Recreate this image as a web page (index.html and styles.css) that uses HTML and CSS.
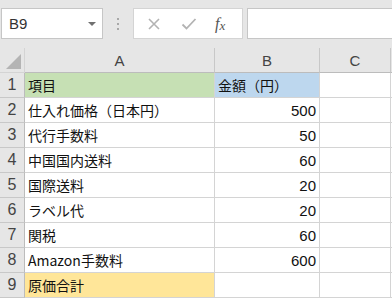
FILE: index.html
```html
<!DOCTYPE html>
<html lang="ja">
<head>
  <meta charset="UTF-8">
  <meta name="viewport" content="width=device-width, initial-scale=1.0">
  <title>原価計算</title>
  <link rel="stylesheet" href="styles.css">
</head>
<body>
  <div class="formula-bar">
    <div class="name-box">
      <span class="cell-ref">B9</span>
      <span class="drop"></span>
    </div>
    <div class="grip">
      <span></span><span></span><span></span>
    </div>
    <div class="fx-buttons">
      <svg class="btn" width="14" height="14" viewBox="0 0 14 14">
        <path d="M2 2 L12 12 M12 2 L2 12" stroke="#b3b3b3" stroke-width="1.6" fill="none"/>
      </svg>
      <svg class="btn" width="16" height="14" viewBox="0 0 16 14">
        <path d="M1.5 7.5 L5.5 11.5 L14.5 2" stroke="#b3b3b3" stroke-width="1.8" fill="none"/>
      </svg>
      <span class="fx">f<span class="fx-x">x</span></span>
    </div>
    <div class="formula-input"></div>
  </div>

  <div class="sheet">
    <div class="corner"><span class="tri"></span></div>
    <div class="col-head">A</div>
    <div class="col-head">B</div>
    <div class="col-head">C</div>
    <div class="col-head rest"></div>

    <div class="row-head">1</div>
    <div class="cell green">項目</div>
    <div class="cell blue">金額（円）</div>
    <div class="cell"></div>
    <div class="cell rest"></div>

    <div class="row-head">2</div>
    <div class="cell">仕入れ価格（日本円）</div>
    <div class="cell num">500</div>
    <div class="cell"></div>
    <div class="cell rest"></div>

    <div class="row-head">3</div>
    <div class="cell">代行手数料</div>
    <div class="cell num">50</div>
    <div class="cell"></div>
    <div class="cell rest"></div>

    <div class="row-head">4</div>
    <div class="cell">中国国内送料</div>
    <div class="cell num">60</div>
    <div class="cell"></div>
    <div class="cell rest"></div>

    <div class="row-head">5</div>
    <div class="cell">国際送料</div>
    <div class="cell num">20</div>
    <div class="cell"></div>
    <div class="cell rest"></div>

    <div class="row-head">6</div>
    <div class="cell">ラベル代</div>
    <div class="cell num">20</div>
    <div class="cell"></div>
    <div class="cell rest"></div>

    <div class="row-head">7</div>
    <div class="cell">関税</div>
    <div class="cell num">60</div>
    <div class="cell"></div>
    <div class="cell rest"></div>

    <div class="row-head">8</div>
    <div class="cell">Amazon手数料</div>
    <div class="cell num">600</div>
    <div class="cell"></div>
    <div class="cell rest"></div>

    <div class="row-head">9</div>
    <div class="cell yellow">原価合計</div>
    <div class="cell"></div>
    <div class="cell"></div>
    <div class="cell rest"></div>
  </div>
</body>
</html>
```

FILE: styles.css
```css
body {
  margin: 0;
  padding: 0;
  height: 300px;
  background: #e6e6e6;
  font-family: "Noto Sans CJK JP", "Liberation Sans", sans-serif;
  overflow: hidden;
}
.formula-bar {
  height: 48px;
  display: flex;
  align-items: flex-start;
  padding-top: 8px;
  box-sizing: border-box;
}
.name-box {
  width: 102px;
  height: 31px;
  margin-left: 1px;
  background: #fff;
  border: 1px solid #c6c6c6;
  box-sizing: border-box;
  display: flex;
  align-items: center;
  justify-content: space-between;
  padding: 0 6px 0 7px;
}
.cell-ref {
  font-family: "Liberation Sans", sans-serif;
  font-size: 15px;
  color: #333;
}
.drop {
  width: 0;
  height: 0;
  border-left: 4px solid transparent;
  border-right: 4px solid transparent;
  border-top: 4px solid #707070;
}
.grip {
  width: 30px;
  height: 31px;
  display: flex;
  flex-direction: column;
  align-items: center;
  justify-content: center;
  gap: 3px;
}
.grip span {
  width: 2px;
  height: 2px;
  background: #a8a8a8;
}
.fx-buttons {
  width: 110px;
  height: 31px;
  background: #fff;
  border: 1px solid #d4d4d4;
  box-sizing: border-box;
  display: flex;
  align-items: center;
  padding-left: 13px;
}
.btn {
  flex: none;
}
.btn + .btn {
  margin-left: 20px;
}
.fx {
  margin-left: 18px;
  font-family: "Liberation Serif", serif;
  font-style: italic;
  font-size: 16px;
  color: #555;
}
.fx-x {
  font-size: 13px;
  position: relative;
  top: 1px;
}
.formula-input {
  flex: 1;
  height: 31px;
  margin-left: 4px;
  background: #fff;
  border: 1px solid #c6c6c6;
  border-right: none;
  box-sizing: border-box;
}
.sheet {
  display: grid;
  grid-template-columns: 25px 190px 105px 71px 1fr;
  grid-auto-rows: 25px;
  background: #fff;
  padding-bottom: 2px;
}
.sheet > div {
  box-sizing: border-box;
  border-right: 1px solid #d4d4d4;
  border-bottom: 1px solid #d4d4d4;
}
.corner {
  background: #e6e6e6;
  position: relative;
}
.corner .tri {
  position: absolute;
  right: 3px;
  bottom: 3px;
  width: 0;
  height: 0;
  border-left: 15px solid transparent;
  border-bottom: 15px solid #b4b4b4;
}
.sheet > .col-head {
  background: #e6e6e6;
  color: #444;
  font-family: "Liberation Sans", sans-serif;
  font-size: 15px;
  display: flex;
  align-items: center;
  justify-content: center;
  border-right-color: #c8c8c8;
  border-bottom-color: #bcbcbc;
}
.sheet > .row-head {
  background: #e6e6e6;
  color: #444;
  font-family: "Liberation Sans", sans-serif;
  font-size: 16px;
  display: flex;
  align-items: center;
  justify-content: center;
  border-right-color: #bcbcbc;
  border-bottom-color: #c8c8c8;
}
.cell {
  font-size: 14px;
  color: #111;
  display: flex;
  align-items: center;
  padding-left: 3px;
  white-space: nowrap;
}
.num {
  justify-content: flex-end;
  padding-right: 3px;
  font-family: "Liberation Sans", sans-serif;
  font-size: 15px;
}
.green {
  background: #c6e0b4;
}
.blue {
  background: #bdd7ee;
}
.yellow {
  background: #ffe699;
}
```
